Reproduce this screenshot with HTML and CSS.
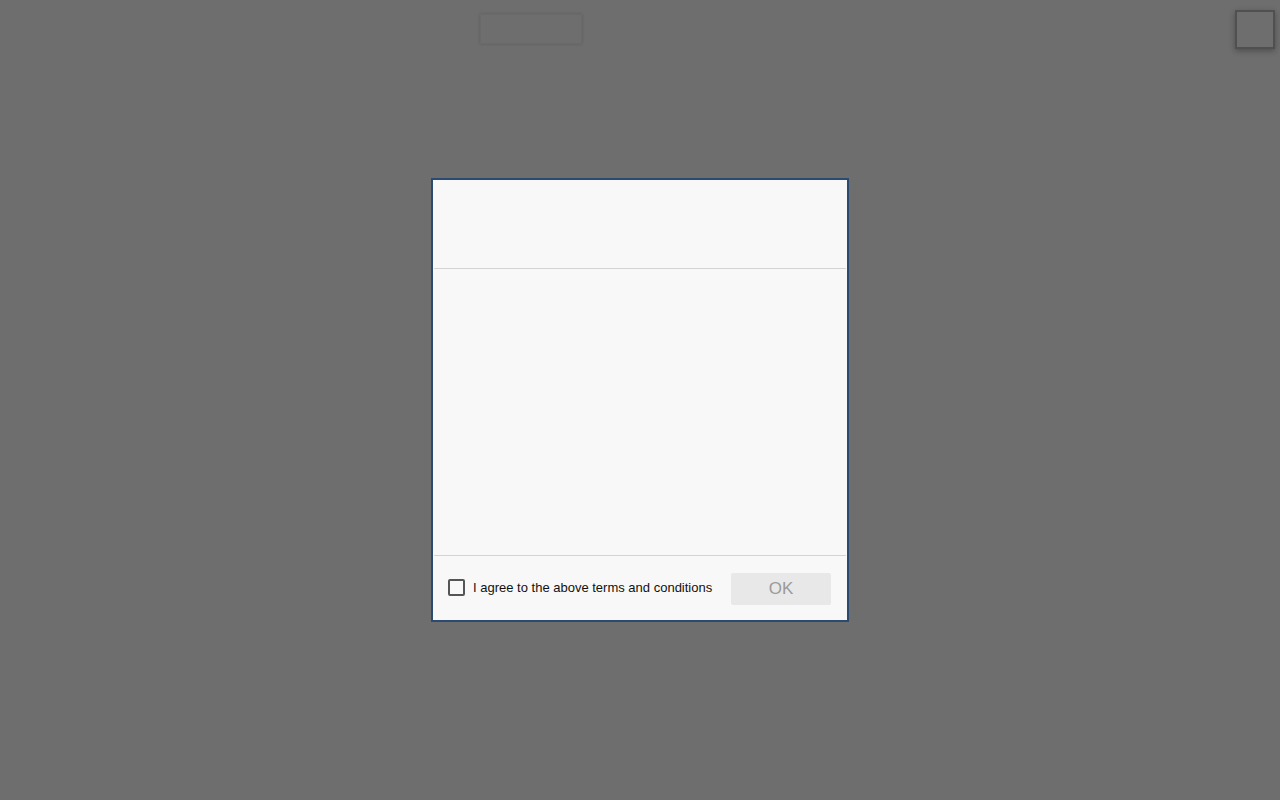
FILE: index.html
```html
<!DOCTYPE html>
<html>
<head>
<meta charset="utf-8">
<link rel="stylesheet" href="styles.css">
</head>
<body>
<div class="topbar">
  <div class="tab"></div>
  <div class="corner"></div>
</div>
<div class="overlay">
  <div class="dialog">
    <div class="dialog-head"></div>
    <div class="dialog-body"></div>
    <div class="dialog-foot">
      <label class="agree"><span class="box"></span><span class="label">I agree to the above terms and conditions</span></label>
      <button class="ok" disabled>OK</button>
    </div>
  </div>
</div>
</body>
</html>
```
FILE: styles.css
```css
html, body {
  margin: 0;
  padding: 0;
  height: 100%;
}
body {
  background: #6e6e6e;
  font-family: "Liberation Sans", Arial, sans-serif;
}
.topbar {
  display: flex;
  justify-content: space-between;
  align-items: flex-start;
  padding: 10px 5px 0 480px;
}
.tab {
  width: 102px;
  height: 30px;
  margin-top: 4px;
  box-sizing: border-box;
  border: 1px solid #6a6a6a;
  box-shadow: 0 0 3px rgba(0,0,0,0.15);
  background: #6e6e6e;
}
.corner {
  width: 40px;
  height: 39px;
  box-sizing: border-box;
  border: 2px solid #505050;
  box-shadow: 0 2px 6px rgba(0,0,0,0.3);
  background: #6e6e6e;
}
.overlay {
  position: fixed;
  inset: 0;
  display: flex;
  align-items: center;
  justify-content: center;
}
.dialog {
  width: 418px;
  height: 444px;
  box-sizing: border-box;
  border: 2px solid #2a4a70;
  background: #f8f8f8;
  display: flex;
  flex-direction: column;
  padding: 0 1px;
}
.dialog-head {
  height: 88px;
  border-bottom: 1px solid #d4d4d4;
}
.dialog-body {
  height: 286px;
  border-bottom: 1px solid #d4d4d4;
}
.dialog-foot {
  flex: 1;
  display: flex;
  align-items: center;
  justify-content: space-between;
  padding: 0 15px 2px 14px;
}
.agree {
  display: flex;
  align-items: center;
  gap: 8px;
}
.box {
  width: 17px;
  height: 17px;
  box-sizing: border-box;
  border: 2px solid #555;
  border-radius: 2px;
  background: #f8f8f8;
}
.label {
  font-size: 13px;
  color: #111;
}
.ok {
  width: 100px;
  height: 32px;
  border: none;
  border-radius: 2px;
  background: #e8e8e8;
  color: #9a9a9a;
  font-family: "Liberation Sans", Arial, sans-serif;
  font-size: 17px;
  padding: 0;
  margin-top: 3px;
}
```
